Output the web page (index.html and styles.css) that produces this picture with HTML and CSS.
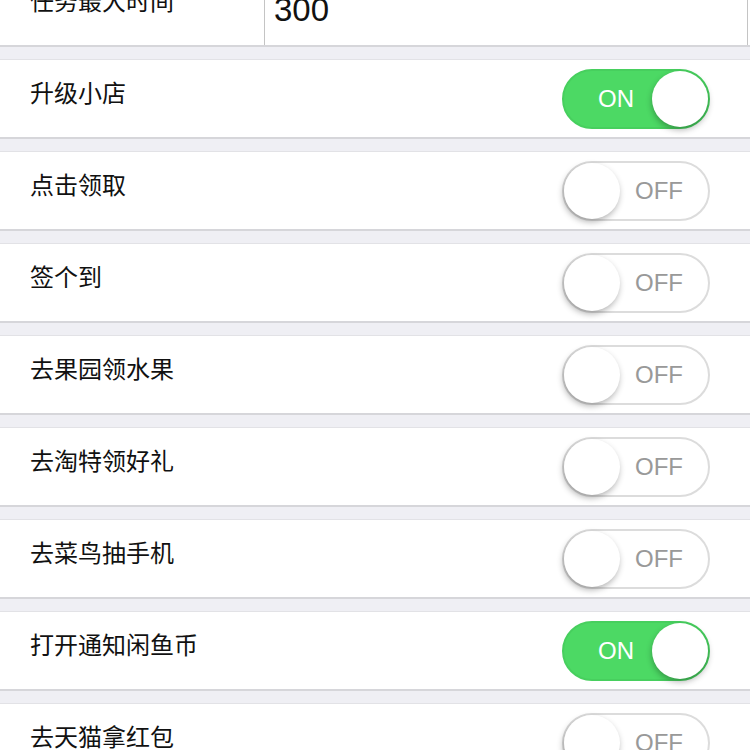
FILE: index.html
```html
<!DOCTYPE html>
<html lang="zh-CN">
<head>
    <meta charset="UTF-8">
    <meta name="viewport" content="width=device-width, initial-scale=1.0">
    <title>任务设置</title>
    <link rel="stylesheet" href="styles.css">
</head>
<body>

    <div class="list">
        <div class="row">
            <span class="label">任务最大时间</span>
            <input class="field" type="text" value="300">
        </div>

        <div class="row">
            <span class="label">升级小店</span>
            <div class="switch on"><span class="text">ON</span><span class="knob"></span></div>
        </div>

        <div class="row">
            <span class="label">点击领取</span>
            <div class="switch"><span class="knob"></span><span class="text">OFF</span></div>
        </div>

        <div class="row">
            <span class="label">签个到</span>
            <div class="switch"><span class="knob"></span><span class="text">OFF</span></div>
        </div>

        <div class="row">
            <span class="label">去果园领水果</span>
            <div class="switch"><span class="knob"></span><span class="text">OFF</span></div>
        </div>

        <div class="row">
            <span class="label">去淘特领好礼</span>
            <div class="switch"><span class="knob"></span><span class="text">OFF</span></div>
        </div>

        <div class="row">
            <span class="label">去菜鸟抽手机</span>
            <div class="switch"><span class="knob"></span><span class="text">OFF</span></div>
        </div>

        <div class="row">
            <span class="label">打开通知闲鱼币</span>
            <div class="switch on"><span class="text">ON</span><span class="knob"></span></div>
        </div>

        <div class="row">
            <span class="label">去天猫拿红包</span>
            <div class="switch"><span class="knob"></span><span class="text">OFF</span></div>
        </div>
    </div>

</body>
</html>
```

FILE: styles.css
```css
body {
    margin: 0;
    background-color: #efeff4;
    font-family: "Liberation Sans", "Noto Sans CJK SC", sans-serif;
    overflow: hidden;
}
.list {
    margin-top: -33px;
}
.row {
    display: flex;
    align-items: center;
    justify-content: space-between;
    height: 77px;
    padding: 0 40px 0 30px;
    margin-bottom: 12px;
    background-color: white;
    border-top: 1px solid #e2e2e6;
    border-bottom: 2px solid #d6d6da;
}
.label {
    font-size: 24px;
    color: #111;
    margin-bottom: 14px;
}
.field {
    align-self: stretch;
    box-sizing: border-box;
    width: 484px;
    margin-right: -38px;
    padding: 5px 0 0 9px;
    border: 1px solid #c4c4c4;
    border-bottom: none;
    font-family: "Liberation Sans", sans-serif;
    font-size: 33px;
    color: #111;
    outline: none;
}
.switch {
    display: flex;
    align-items: center;
    box-sizing: border-box;
    width: 148px;
    height: 60px;
    border: 2px solid #dcdcdc;
    border-radius: 30px;
    background-color: white;
}
.switch .knob {
    width: 56px;
    height: 56px;
    border-radius: 50%;
    background-color: white;
    box-shadow: -1px 3px 6px rgba(0, 0, 0, 0.3);
}
.switch .text {
    flex: 1;
    text-align: center;
    padding-right: 10px;
    font-size: 24px;
    color: #999;
}
.switch.on {
    background-color: #4cd964;
    border-color: #47cf5e;
}
.switch.on .text {
    padding: 0 0 0 16px;
    color: white;
}
.switch.on .knob {
    box-shadow: 0 3px 6px rgba(0, 0, 0, 0.3);
}
```
